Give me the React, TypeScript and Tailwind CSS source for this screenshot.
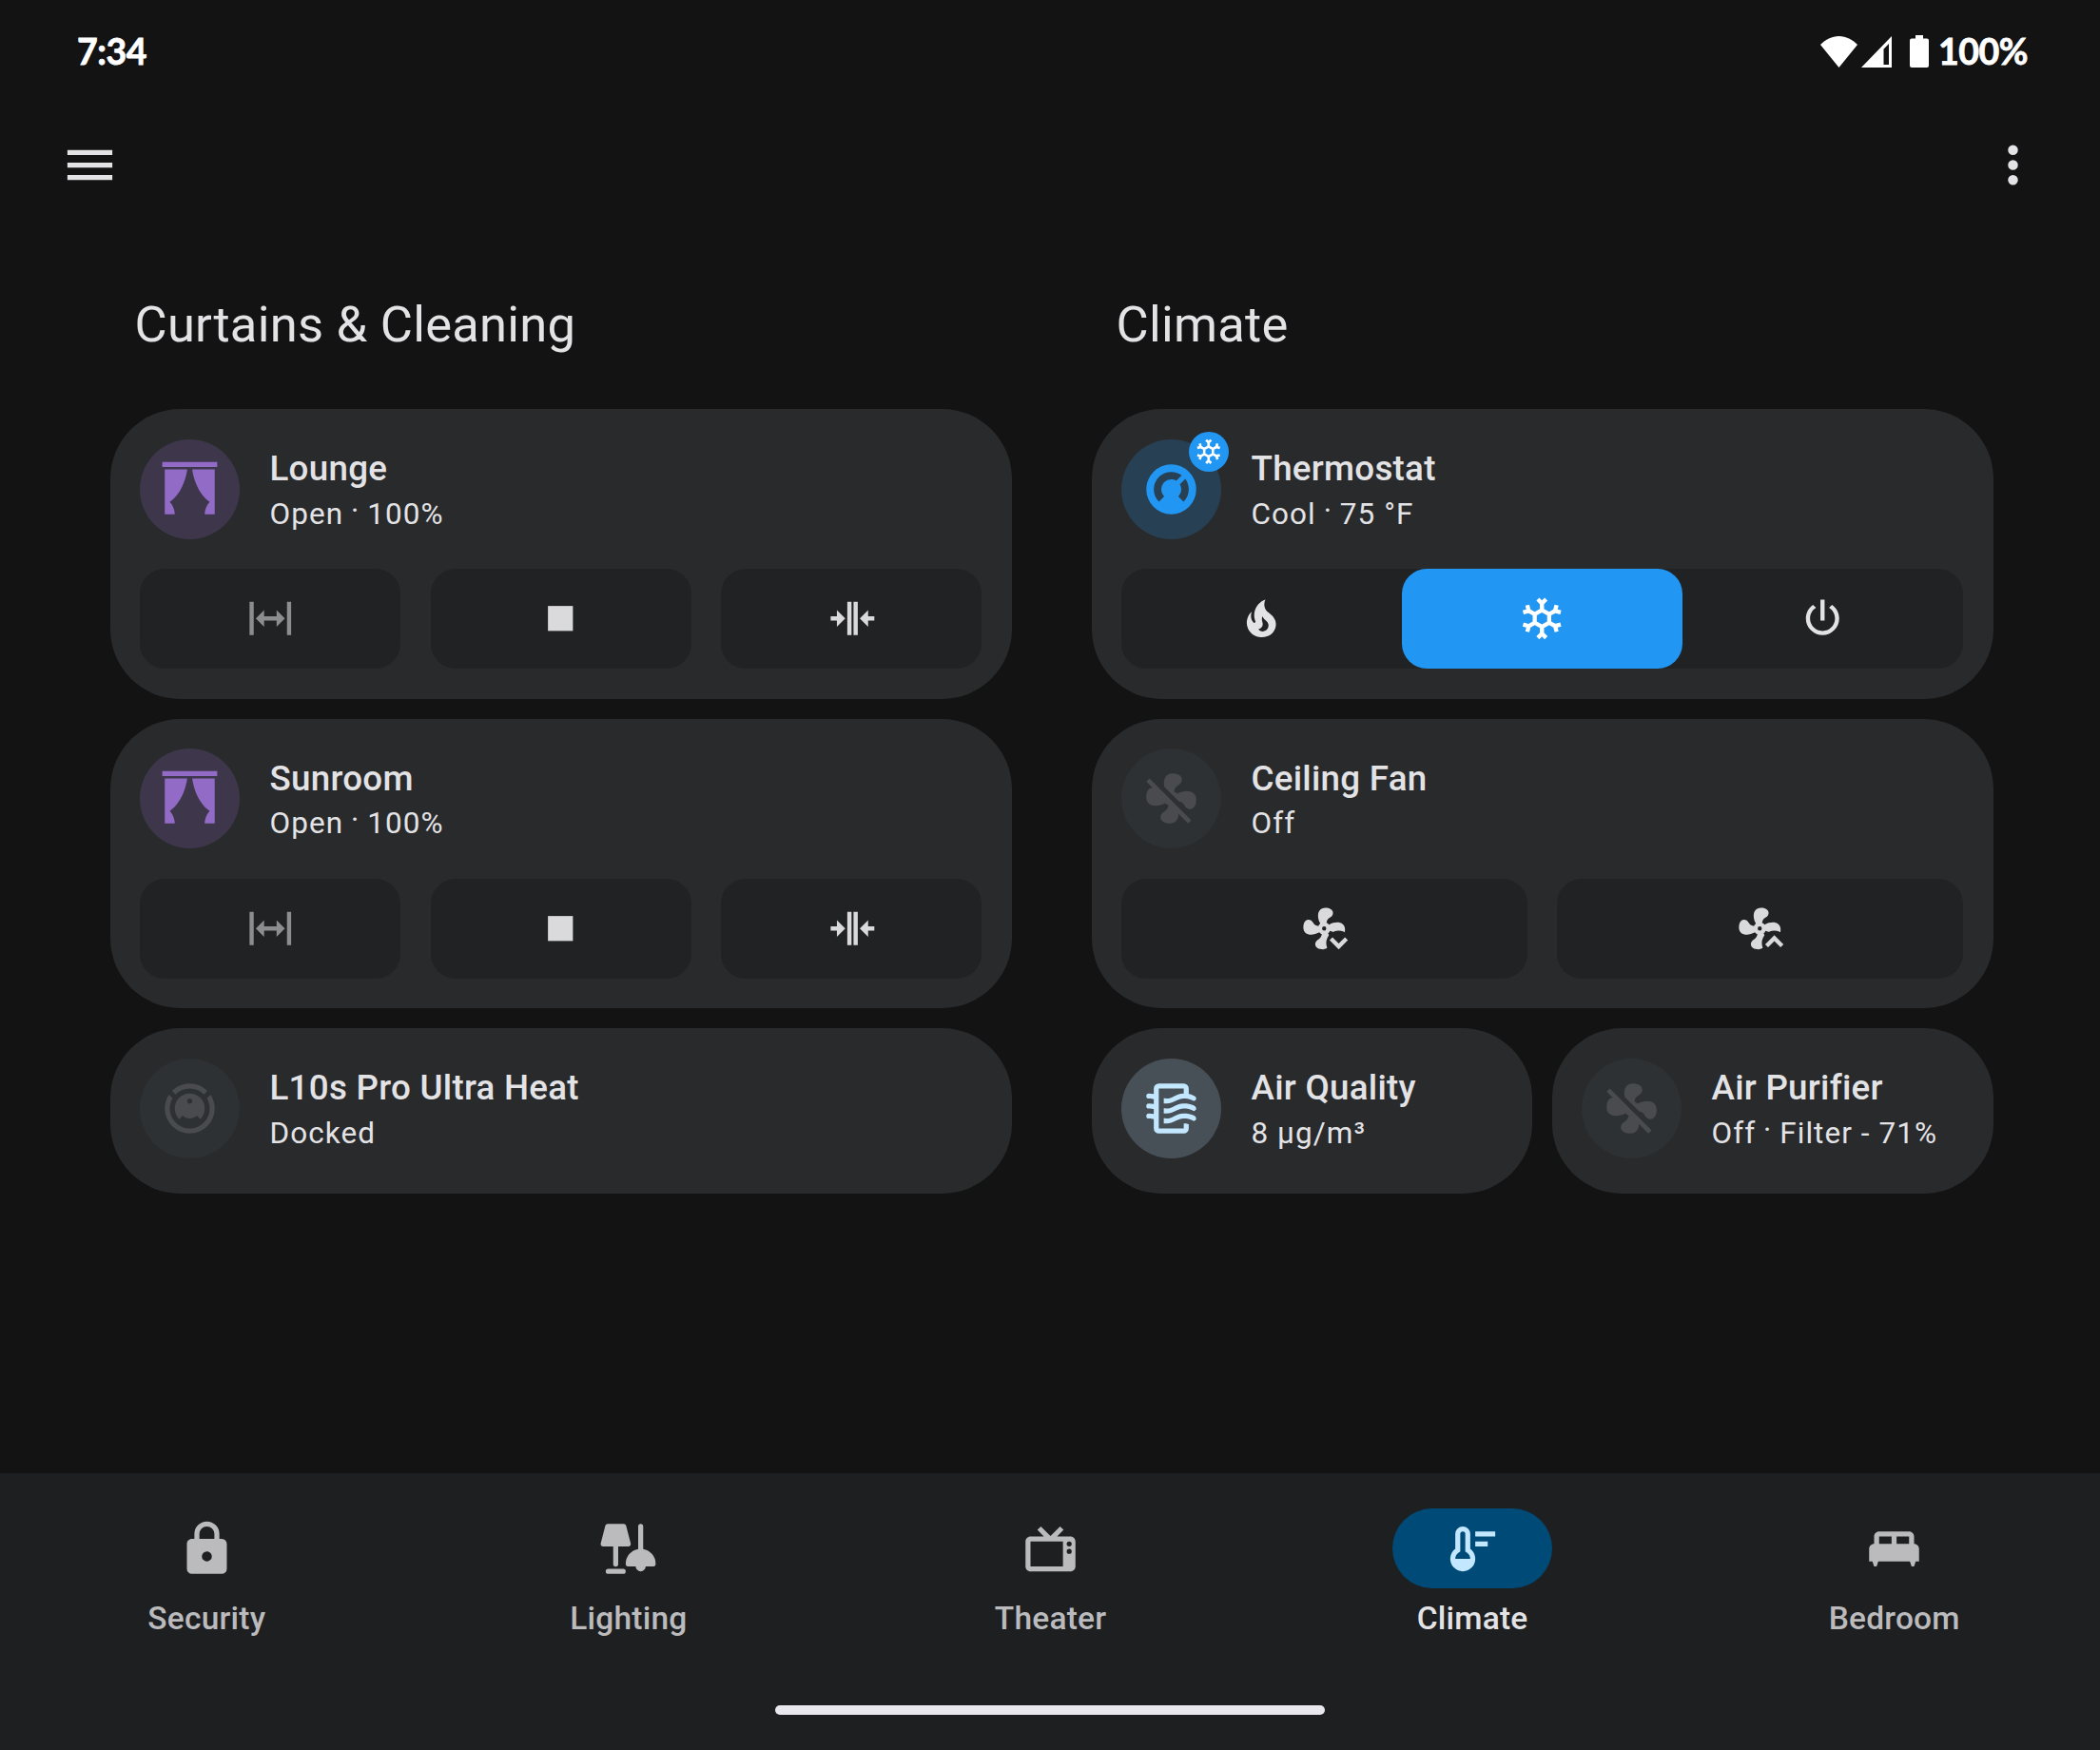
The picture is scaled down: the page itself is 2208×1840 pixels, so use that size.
import type { ReactNode } from 'react';

const ICONS = {
  menu: 'M3,6H21V8H3V6M3,11H21V13H3V11M3,16H21V18H3V16Z',
  dots: 'M12,16A2,2 0 0,1 14,18A2,2 0 0,1 12,20A2,2 0 0,1 10,18A2,2 0 0,1 12,16M12,10A2,2 0 0,1 14,12A2,2 0 0,1 12,14A2,2 0 0,1 10,12A2,2 0 0,1 12,10M12,4A2,2 0 0,1 14,6A2,2 0 0,1 12,8A2,2 0 0,1 10,6A2,2 0 0,1 12,4Z',
  curtains:
    'M23 3H1V1H23V3M2 22H6C6 19 4 17 4 17C10 13 11 4 11 4H2V22M22 4H13C13 4 14 13 20 17C20 17 18 19 18 22H22V4Z',
  expand: 'M9,11H15V8L19,12L15,16V13H9V16L5,12L9,8V11M2,20V4H4V20H2M20,20V4H22V20H20Z',
  collapse:
    'M13,20V4H15.03V20H13M10,20V4H12.03V20H10M5,8L9.03,12L5,16V13H2V11H5V8M20,16L16,12L20,8V11H23V13H20V16Z',
  stop: 'M18,18H6V6H18V18Z',
  snowflake:
    'M20.79,13.95L18.46,14.57L16.46,13.44V10.56L18.46,9.43L20.79,10.05L21.31,8.12L19.54,7.65L20,5.88L18.07,5.36L17.45,7.69L15.45,8.82L13,7.38V5.12L14.71,3.41L13.29,2L12,3.29L10.71,2L9.29,3.41L11,5.12V7.38L8.5,8.82L6.5,7.69L5.92,5.36L4,5.88L4.47,7.65L2.7,8.12L3.22,10.05L5.55,9.43L7.55,10.56V13.45L5.55,14.58L3.22,13.96L2.7,15.89L4.47,16.36L4,18.12L5.93,18.64L6.55,16.31L8.55,15.18L11,16.62V18.88L9.29,20.59L10.71,22L12,20.71L13.29,22L14.7,20.59L13,18.88V16.62L15.5,15.17L17.5,16.3L18.12,18.63L20,18.12L19.53,16.35L21.3,15.88L20.79,13.95M9.5,10.56L12,9.11L14.5,10.56V13.44L12,14.89L9.5,13.44V10.56Z',
  power:
    'M16.56,5.44L15.11,6.89C16.84,7.94 18,9.83 18,12A6,6 0 0,1 12,18A6,6 0 0,1 6,12C6,9.83 7.16,7.94 8.88,6.88L7.44,5.44C5.36,6.88 4,9.28 4,12A8,8 0 0,0 12,20A8,8 0 0,0 20,12C20,9.28 18.64,6.88 16.56,5.44M13,3H11V13H13',
  fire: 'M17.66 11.2C17.43 10.9 17.15 10.64 16.89 10.38C16.22 9.78 15.46 9.35 14.82 8.72C13.33 7.26 13 4.85 13.95 3C13 3.23 12.17 3.75 11.46 4.32C8.87 6.4 7.85 10.07 9.07 13.22C9.11 13.32 9.15 13.42 9.15 13.55C9.15 13.77 9 13.97 8.8 14.05C8.57 14.15 8.33 14.09 8.14 13.93C8.08 13.88 8.04 13.83 8 13.76C6.87 12.33 6.69 10.28 7.45 8.64C5.78 10 4.87 12.3 5 14.47C5.06 14.97 5.12 15.47 5.29 15.97C5.43 16.57 5.7 17.17 6 17.7C7.08 19.43 8.95 20.67 10.96 20.92C13.1 21.19 15.39 20.8 17.03 19.32C18.86 17.66 19.5 15 18.56 12.72L18.43 12.46C18.22 12 17.66 11.2 17.66 11.2M14.5 17.5C14.22 17.74 13.76 18 13.4 18.1C12.28 18.5 11.16 17.94 10.5 17.28C11.69 17 12.4 16.12 12.61 15.23C12.78 14.43 12.46 13.77 12.33 13C12.21 12.26 12.23 11.63 12.5 10.94C12.69 11.32 12.89 11.7 13.13 12C13.9 13 15.11 13.44 15.37 14.8C15.41 14.94 15.43 15.08 15.43 15.23C15.46 16.05 15.1 16.95 14.5 17.5H14.5Z',
  thermostat:
    'M16.95,16.95L14.83,14.83C15.55,14.1 16,13.1 16,12C16,11.26 15.79,10.57 15.43,10L17.6,7.81C18.5,9 19,10.43 19,12C19,13.93 18.22,15.68 16.95,16.95M12,5C13.57,5 15,5.5 16.19,6.4L14,8.56C13.43,8.21 12.74,8 12,8A4,4 0 0,0 8,12C8,13.1 8.45,14.1 9.17,14.83L7.05,16.95C5.78,15.68 5,13.93 5,12A7,7 0 0,1 12,5M12,2A10,10 0 0,0 2,12A10,10 0 0,0 12,22A10,10 0 0,0 22,12A10,10 0 0,0 12,2Z',
  fan: 'M12,11A1,1 0 0,0 11,12A1,1 0 0,0 12,13A1,1 0 0,0 13,12A1,1 0 0,0 12,11M12.5,2C17,2 17.11,5.57 14.75,6.75C13.76,7.24 13.32,8.29 13.13,9.22C13.61,9.42 14.03,9.73 14.35,10.13C18.05,8.13 22.03,8.92 22.03,12.5C22.03,17 18.46,17.1 17.28,14.73C16.78,13.74 15.72,13.3 14.79,13.11C14.59,13.59 14.28,14 13.88,14.34C15.87,18.03 15.08,22 11.5,22C7,22 6.91,18.42 9.27,17.24C10.25,16.75 10.69,15.71 10.89,14.79C10.4,14.59 9.97,14.27 9.65,13.87C5.96,15.85 2,15.07 2,11.5C2,7 5.56,6.89 6.74,9.26C7.24,10.25 8.29,10.68 9.22,10.87C9.41,10.39 9.73,9.97 10.14,9.65C8.15,5.96 8.94,2 12.5,2Z',
  fanOff:
    'M12.5,2C9.64,2 8.57,4.55 9.29,7.47L15,13.16C15.87,13.37 16.81,13.81 17.28,14.73C18.46,17.1 22.03,17 22.03,12.5C22.03,8.92 18.05,8.13 14.35,10.13C14.03,9.73 13.61,9.42 13.13,9.22C13.32,8.29 13.76,7.24 14.75,6.75C17.11,5.57 17,2 12.5,2M3.28,4L2,5.27L4.47,7.73C3.22,7.74 2,8.87 2,11.5C2,15.07 5.96,15.85 9.65,13.87C9.97,14.27 10.4,14.59 10.89,14.79C10.69,15.71 10.25,16.75 9.27,17.24C6.91,18.42 7,22 11.5,22C13.8,22 14.94,20.36 14.94,18.21L18.73,22L20,20.72L3.28,4Z',
  vacuum:
    'M12,2C14.65,2 17.19,3.06 19.07,4.93L17.65,6.35C16.15,4.85 14.12,4 12,4C9.88,4 7.84,4.84 6.35,6.35L4.93,4.93C6.81,3.06 9.35,2 12,2M3.66,6.5L5.11,7.94C4.39,9.17 4,10.57 4,12A8,8 0 0,0 12,20A8,8 0 0,0 20,12C20,10.57 19.61,9.17 18.88,7.94L20.34,6.5C21.42,8.12 22,10.04 22,12A10,10 0 0,1 12,22A10,10 0 0,1 2,12C2,10.04 2.58,8.12 3.66,6.5M12,6A6,6 0 0,1 18,12C18,13.59 17.37,15.12 16.24,16.24L14.83,14.83C14.08,15.58 13.06,16 12,16C10.94,16 9.92,15.58 9.17,14.83L7.76,16.24C6.63,15.12 6,13.59 6,12A6,6 0 0,1 12,6M12,8A1,1 0 0,0 11,9A1,1 0 0,0 12,10A1,1 0 0,0 13,9A1,1 0 0,0 12,8Z',
  airFilter:
    'M19,18.31V20A2,2 0 0,1 17,22H7A2,2 0 0,1 5,20V16.3C4.54,16.12 3.95,16 3,16A1,1 0 0,1 2,15A1,1 0 0,1 3,14C3.82,14 4.47,14.08 5,14.21V12.3C4.54,12.12 3.95,12 3,12A1,1 0 0,1 2,11A1,1 0 0,1 3,10C3.82,10 4.47,10.08 5,10.21V8.3C4.54,8.12 3.95,8 3,8A1,1 0 0,1 2,7A1,1 0 0,1 3,6C3.82,6 4.47,6.08 5,6.21V4A2,2 0 0,1 7,2H17A2,2 0 0,1 19,4V6.16C20.78,6.47 21.54,7.13 21.71,7.29C22.1,7.68 22.1,8.32 21.71,8.71C21.32,9.1 20.8,9.09 20.29,8.71V8.71C20.29,8.71 19.25,8 17,8C15.74,8 14.91,8.41 13.95,8.9C12.91,9.41 11.74,10 10,10C9.64,10 9.31,10 9,9.96V7.95C9.3,8 9.63,8 10,8C11.26,8 12.09,7.59 13.05,7.11C14.09,6.59 15.27,6 17,6V4H7V20H17V18C18.5,18 18.97,18.29 19,18.31M17,10C15.27,10 14.09,10.59 13.05,11.11C12.09,11.59 11.26,12 10,12C9.63,12 9.3,12 9,11.95V13.96C9.31,14 9.64,14 10,14C11.74,14 12.91,13.41 13.95,12.9C14.91,12.42 15.74,12 17,12C19.25,12 20.29,12.71 20.29,12.71V12.71C20.8,13.1 21.32,13.1 21.71,12.71C22.1,12.32 22.1,11.69 21.71,11.29C21.5,11.08 20.25,10 17,10M17,14C15.27,14 14.09,14.59 13.05,15.11C12.09,15.59 11.26,16 10,16C9.63,16 9.3,16 9,15.95V17.96C9.31,18 9.64,18 10,18C11.74,18 12.91,17.41 13.95,16.9C14.91,16.42 15.74,16 17,16C19.25,16 20.29,16.71 20.29,16.71V16.71C20.8,17.1 21.32,17.1 21.71,16.71C22.1,16.32 22.1,15.69 21.71,15.29C21.5,15.08 20.25,14 17,14Z',
  lock: 'M12,17A2,2 0 0,0 14,15C14,13.89 13.1,13 12,13A2,2 0 0,0 10,15A2,2 0 0,0 12,17M18,8A2,2 0 0,1 20,10V20A2,2 0 0,1 18,22H6A2,2 0 0,1 4,20V10C4,8.89 4.9,8 6,8H7V6A5,5 0 0,1 12,1A5,5 0 0,1 17,6V8H18M12,3A3,3 0 0,0 9,6V8H15V6A3,3 0 0,0 12,3Z',
  lamps:
    'M3.8 2H10.2A1 1 0 0 1 11.15 2.7L13 9.8A.95 .95 0 0 1 12.1 11H8V18.2A1 .9 0 0 1 6 18.2V11H1.9A.95 .95 0 0 1 1 9.8L2.85 2.7A1 1 0 0 1 3.8 2M4 20H10A1 1 0 0 1 10 22H4A1 1 0 0 1 4 20M16 3A1 1 0 0 1 18 3V12.08A6 6 0 0 1 23 18V18.2A.8 .8 0 0 1 22.2 19H19A2 2 0 0 1 15 19H11.8A.8 .8 0 0 1 11 18.2V18A6 6 0 0 1 16 12.08V3Z',
  tv: 'M8.16,3L6.75,4.41L9.34,7H4C2.89,7 2,7.89 2,9V19C2,20.11 2.89,21 4,21H20C21.11,21 22,20.11 22,19V9C22,7.89 21.11,7 20,7H14.66L17.25,4.41L15.84,3L12,6.84L8.16,3M4,9H17V19H4V9M19.5,9A1,1 0 0,1 20.5,10A1,1 0 0,1 19.5,11A1,1 0 0,1 18.5,10A1,1 0 0,1 19.5,9M19.5,12A1,1 0 0,1 20.5,13A1,1 0 0,1 19.5,14A1,1 0 0,1 18.5,13A1,1 0 0,1 19.5,12Z',
  thermometer:
    'M11 12V6A3 3 0 0 0 5 6V12A5 5 0 1 0 11 12M5 16C5 15.06 5.44 14.17 6.2 13.6L7 13V6A1 1 0 0 1 9 6V13L9.8 13.6C10.56 14.17 11 15.06 11 16H5M13 5H21V7H13V5M13 9H18V11H13V9Z',
  bed: 'M22 12c0-1.1-.9-2-2-2V7c0-1.1-.9-2-2-2H6c-1.1 0-2 .9-2 2v3c-1.1 0-2 .9-2 2v5h1.33L4 19h1l.67-2h12.67l.66 2h1l.67-2H22v-5zm-11-2H6V7h5v3zm7 0h-5V7h5v3z',
};

type IconName = keyof typeof ICONS;

function Icon({ name, className = 'size-[63px]' }: { name: IconName; className?: string }) {
  return (
    <svg viewBox="0 0 24 24" className={`shrink-0 ${className}`} fill="currentColor" fillRule="evenodd">
      <path d={ICONS[name]} />
    </svg>
  );
}

const CONTROL_ICON = 'size-[52.5px]';

function FanStepIcon({ direction }: { direction: 'up' | 'down' }) {
  const maskId = `fan-cut-${direction}`;
  return (
    <svg viewBox="0 0 24 24" className="size-[52.5px] shrink-0" fill="currentColor">
      <mask id={maskId}>
        <rect width="24" height="24" fill="white" />
        <circle cx="19" cy="19" r="6" fill="black" />
      </mask>
      <path d={ICONS.fan} fillRule="evenodd" mask={`url(#${maskId})`} />
      {direction === 'down' ? (
        <path d="M16 16.2L19 19.2L22 16.2L23.4 17.6L19 22L14.6 17.6Z" />
      ) : (
        <path d="M16 21L19 18L22 21L23.4 19.6L19 15.2L14.6 19.6Z" />
      )}
    </svg>
  );
}

function Dot() {
  return <span className="relative -top-[3px] mr-[-1px] ml-[-1px]">·</span>;
}

interface CardProps {
  icon: IconName;
  tone: string;
  title: string;
  state: ReactNode;
  badge?: ReactNode;
  children?: ReactNode;
}

function Card({ icon, tone, title, state, badge, children }: CardProps) {
  return (
    <section
      className={`min-w-0 flex-1 rounded-[73.5px] bg-[#292a2c] pt-[31.5px] pr-[32px] pl-[31px] ${children ? 'pb-[31.5px]' : 'pb-[37.5px]'}`}
    >
      <div className="flex items-center gap-[31.5px]">
        <div className={`relative flex size-[105px] shrink-0 items-center justify-center rounded-full ${tone}`}>
          <Icon name={icon} />
          {badge}
        </div>
        <div className="min-w-0 pt-px whitespace-nowrap text-[#e3e3e6]">
          <h3 className="text-[36.75px] leading-[52.5px] font-medium tracking-[0.26px]">{title}</h3>
          <p className="text-[31.5px] leading-[42px] tracking-[1.05px]">{state}</p>
        </div>
      </div>
      {children && <div className="mt-[31.5px]">{children}</div>}
    </section>
  );
}

function ControlButton({ children, dim }: { children: ReactNode; dim?: boolean }) {
  return (
    <button
      className={`flex h-[105px] flex-1 items-center justify-center rounded-[26.25px] bg-[#212224] ${dim ? 'text-[#8c8d8f]' : 'text-[#dadadc]'}`}
    >
      {children}
    </button>
  );
}

function CurtainCard({ title }: { title: string }) {
  return (
    <Card
      icon="curtains"
      tone="bg-[#3e374b] text-[#926bc7]"
      title={title}
      state={
        <>
          Open <Dot /> 100%
        </>
      }
    >
      <div className="flex gap-[31.5px]">
        <ControlButton dim>
          <Icon name="expand" className={CONTROL_ICON} />
        </ControlButton>
        <ControlButton>
          <Icon name="stop" className={CONTROL_ICON} />
        </ControlButton>
        <ControlButton>
          <Icon name="collapse" className={CONTROL_ICON} />
        </ControlButton>
      </div>
    </Card>
  );
}

function Column({ title, children }: { title: string; children: ReactNode }) {
  return (
    <div className="flex flex-1 flex-col">
      <h2 className="mb-[57px] pl-[25.5px] text-[52.5px] leading-[63px] tracking-[0.25px] text-[#e3e3e6]">{title}</h2>
      <div className="flex flex-col gap-[21px]">{children}</div>
    </div>
  );
}

const OFF_TONE = 'bg-[#2d3134] text-[#4a4b4e]';

const NAV: { icon: IconName; label: string; active?: boolean }[] = [
  { icon: 'lock', label: 'Security' },
  { icon: 'lamps', label: 'Lighting' },
  { icon: 'tv', label: 'Theater' },
  { icon: 'thermometer', label: 'Climate', active: true },
  { icon: 'bed', label: 'Bedroom' },
];

export default function App() {
  return (
    <div className="flex h-[1840px] w-[2208px] flex-col overflow-hidden bg-[#131313] font-[Roboto,sans-serif]">
      <header className="flex h-[108px] items-center justify-between pr-[76px] pl-[81px] font-[Lato,sans-serif] text-[37.5px] font-bold text-white [-webkit-text-stroke:0.8px_white]">
        <span className="tracking-[-0.5px]">7:34</span>
        <div className="flex items-center">
          <svg viewBox="0 0 39 33" className="h-[33px] w-[39px]" fill="currentColor">
            <path d="M19.5 33L0 9C5.5 3.5 12 0 19.5 0S33.500 3.500 39 9Z" />
          </svg>
          <svg viewBox="0 0 32 33" className="ml-[4px] h-[33px] w-[32px]" fill="currentColor" fillRule="evenodd">
            <path d="M32 0V33H0ZM29 8L23.500 13.500V30H29Z" />
          </svg>
          <svg viewBox="0 0 20 34" className="ml-[19px] h-[34px] w-[20px]" fill="currentColor">
            <path d="M6 0H14V3.500H18A2 2 0 0 1 20 5.500V32A2 2 0 0 1 18 34H2A2 2 0 0 1 0 32V5.500A2 2 0 0 1 2 3.500H6Z" />
          </svg>
          <span className="ml-[10px] tracking-[-0.5px]">100%</span>
        </div>
      </header>

      <div className="flex h-[131px] items-center justify-between px-[60px] text-[#e3e3e6]">
        <Icon name="menu" className="ml-[3px] size-[63px]" />
        <Icon name="dots" />
      </div>

      <main className="flex flex-1 gap-[84px] pt-[71px] pr-[112px] pl-[116px]">
        <Column title="Curtains & Cleaning">
          <CurtainCard title="Lounge" />
          <CurtainCard title="Sunroom" />
          <Card icon="vacuum" tone={OFF_TONE} title="L10s Pro Ultra Heat" state="Docked" />
        </Column>
        <Column title="Climate">
          <Card
            icon="thermostat"
            tone="bg-[#284054] text-[#2196f3]"
            title="Thermostat"
            state={
              <>
                Cool <Dot /> 75 °F
              </>
            }
            badge={
              <span className="absolute -top-[8px] -right-[8px] flex size-[42px] items-center justify-center rounded-full bg-[#2196f3] text-white">
                <Icon name="snowflake" className="size-[31.5px]" />
              </span>
            }
          >
            <div className="flex rounded-[26.25px] bg-[#212224] text-[#e3e3e6]">
              <button className="flex h-[105px] flex-1 items-center justify-center">
                <Icon name="fire" className={CONTROL_ICON} />
              </button>
              <button className="flex h-[105px] flex-1 items-center justify-center rounded-[26.25px] bg-[#2196f3] text-white">
                <Icon name="snowflake" className={CONTROL_ICON} />
              </button>
              <button className="flex h-[105px] flex-1 items-center justify-center">
                <Icon name="power" className={CONTROL_ICON} />
              </button>
            </div>
          </Card>
          <Card icon="fanOff" tone={OFF_TONE} title="Ceiling Fan" state="Off">
            <div className="flex gap-[31.5px]">
              <ControlButton>
                <FanStepIcon direction="down" />
              </ControlButton>
              <ControlButton>
                <FanStepIcon direction="up" />
              </ControlButton>
            </div>
          </Card>
          <div className="grid grid-cols-[463px_464px] gap-[21px]">
            <Card icon="airFilter" tone="bg-[#485057] text-[#c2e7ff]" title="Air Quality" state="8 µg/m³" />
            <Card
              icon="fanOff"
              tone={OFF_TONE}
              title="Air Purifier"
              state={
                <>
                  Off <Dot /> Filter - 71%
                </>
              }
            />
          </div>
        </Column>
      </main>

      <nav className="flex h-[291px] flex-col items-center bg-[#1e1f21] pt-[37px]">
        <div className="flex justify-center gap-[275.6px] pl-px">
          {NAV.map(({ icon, label, active }) => (
            <div
              key={label}
              className={`flex w-[168px] flex-col items-center ${active ? 'text-[#e3e3e6]' : 'text-[#bbbbbd]'}`}
            >
              <div
                className={`flex h-[84px] w-[168px] items-center justify-center rounded-full ${active ? 'bg-[#004a77] text-[#c2e7ff]' : ''}`}
              >
                <Icon name={icon} />
              </div>
              <span className="mt-[11px] text-[33.5px] leading-[42px] font-medium tracking-[0.2px] whitespace-nowrap">
                {label}
              </span>
            </div>
          ))}
        </div>
        <div className="mt-[70px] h-[10px] w-[578px] rounded-full bg-[#e8e8ee]" />
      </nav>
    </div>
  );
}
